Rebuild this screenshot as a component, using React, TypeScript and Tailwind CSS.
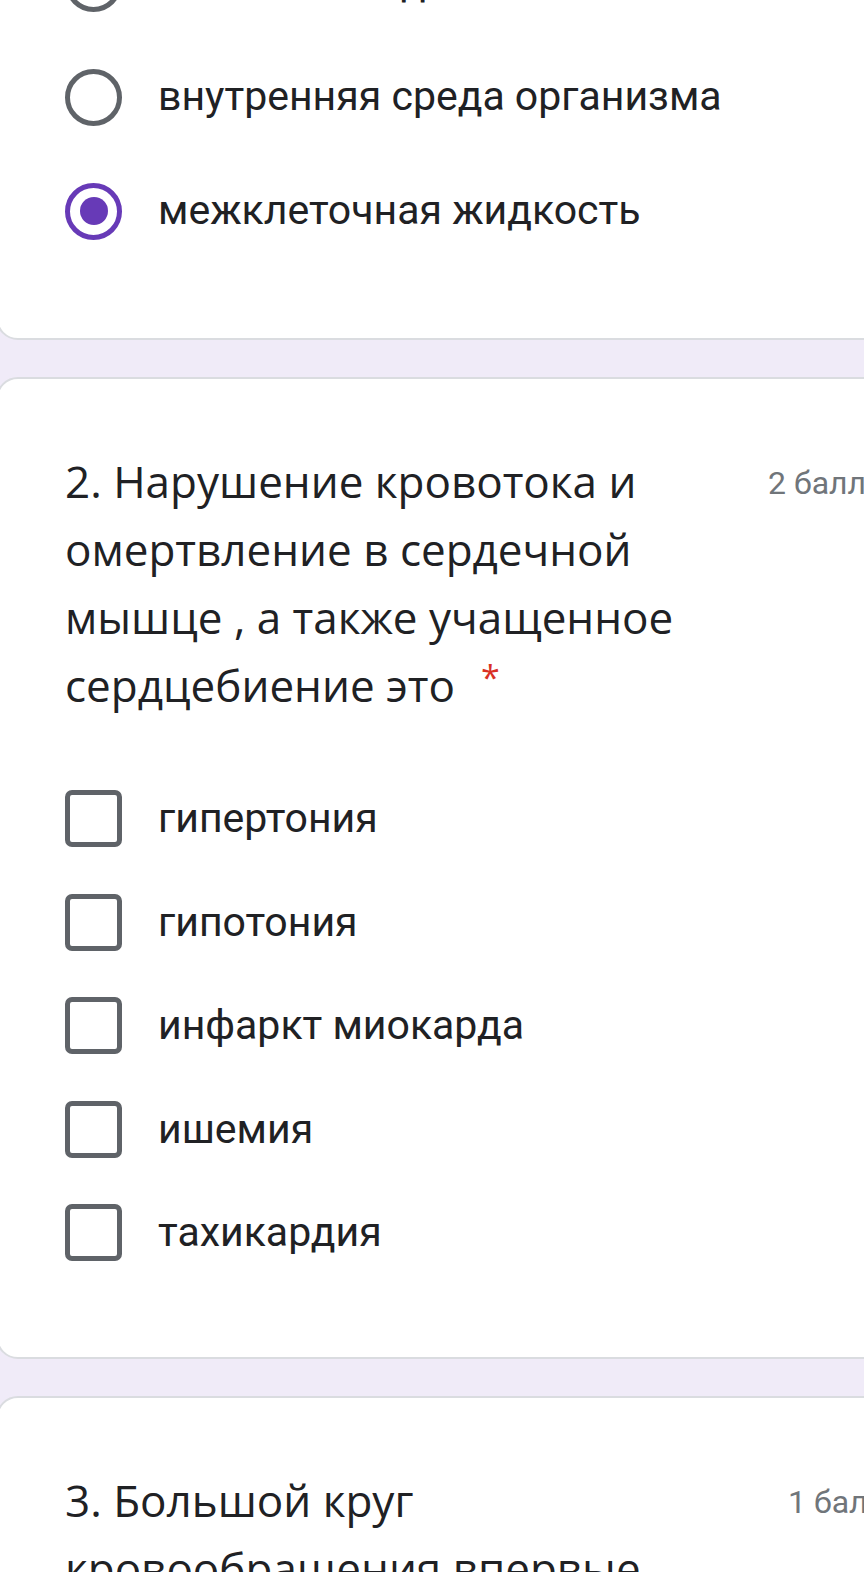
import React from "react";

const optionFont = { fontFamily: "Roboto, 'Liberation Sans', sans-serif" };
const titleFont = { fontFamily: "'Open Sans', 'Liberation Sans', sans-serif" };

function Radio({ checked }: { checked?: boolean }) {
  if (checked) {
    return (
      <div className="flex h-[57px] w-[57px] flex-none items-center justify-center rounded-full border-[5px] border-[#673ab7]">
        <div className="h-[28px] w-[28px] rounded-full bg-[#673ab7]" />
      </div>
    );
  }
  return <div className="h-[57px] w-[57px] flex-none rounded-full border-[5px] border-[#5f6368]" />;
}

function Checkbox() {
  return <div className="h-[57px] w-[57px] flex-none rounded-[7px] border-[5px] border-[#5f6368]" />;
}

function RadioRow({ label, checked }: { label: string; checked?: boolean }) {
  return (
    <div className="flex h-[114px] items-center gap-[36px]">
      <Radio checked={checked} />
      <span className="text-[41px] text-[#202124]" style={optionFont}>
        {label}
      </span>
    </div>
  );
}

function CheckRow({ label }: { label: string }) {
  return (
    <div className="flex h-[103.5px] items-center gap-[36px]">
      <Checkbox />
      <span className="text-[41px] text-[#202124]" style={optionFont}>
        {label}
      </span>
    </div>
  );
}

function Header({ title, points, required, gap }: { title: string; points: string; required?: boolean; gap: string }) {
  return (
    <div className="flex items-start">
      <div className={`w-[640px] flex-none text-[44px] leading-[68px] text-[#202124] ${gap}`} style={titleFont}>
        {title}
        {required && (
          <span className="relative top-[-8px] pl-[26px] align-top text-[34px] text-[#d93025]">*</span>
        )}
      </div>
      <div className="whitespace-nowrap pt-[16px] text-[32px] leading-[40px] text-[#70757a]" style={optionFont}>
        {points}
      </div>
    </div>
  );
}

export default function App() {
  const checks = ["гипертония", "гипотония", "инфаркт миокарда", "ишемия", "тахикардия"];

  return (
    <div className="h-[1572px] w-full overflow-hidden bg-[#f0ebf8]">
      <div className="ml-[-4px] mr-[-40px] flex flex-col gap-[37px]">
        {/* Card 1 - scrolled past the top */}
        <div className="mt-[-80px] rounded-[22px] border-[2px] border-[#dadce0] bg-white pb-[70px] pl-[67px] pt-[4px]">
          <RadioRow label="тканевая жидкость" />
          <RadioRow label="внутренняя среда организма" />
          <RadioRow label="межклеточная жидкость" checked />
        </div>

        {/* Card 2 */}
        <div className="rounded-[22px] border-[2px] border-[#dadce0] bg-white pb-[72px] pl-[67px] pt-[68px]">
          <Header
            title="2. Нарушение кровотока и омертвление в сердечной мышце , а также учащенное сердцебиение это"
            points="2 балла"
            required
            gap="mr-[63px]"
          />
          <div className="mt-[48px]">
            {checks.map((c) => (
              <CheckRow key={c} label={c} />
            ))}
          </div>
        </div>

        {/* Card 3 */}
        <div className="h-[300px] rounded-[22px] border-[2px] border-[#dadce0] bg-white pl-[67px] pt-[68px]">
          <Header
            title="3. Большой круг кровообращения впервые"
            points="1 балл"
            gap="mr-[83px]"
          />
        </div>
      </div>
    </div>
  );
}
